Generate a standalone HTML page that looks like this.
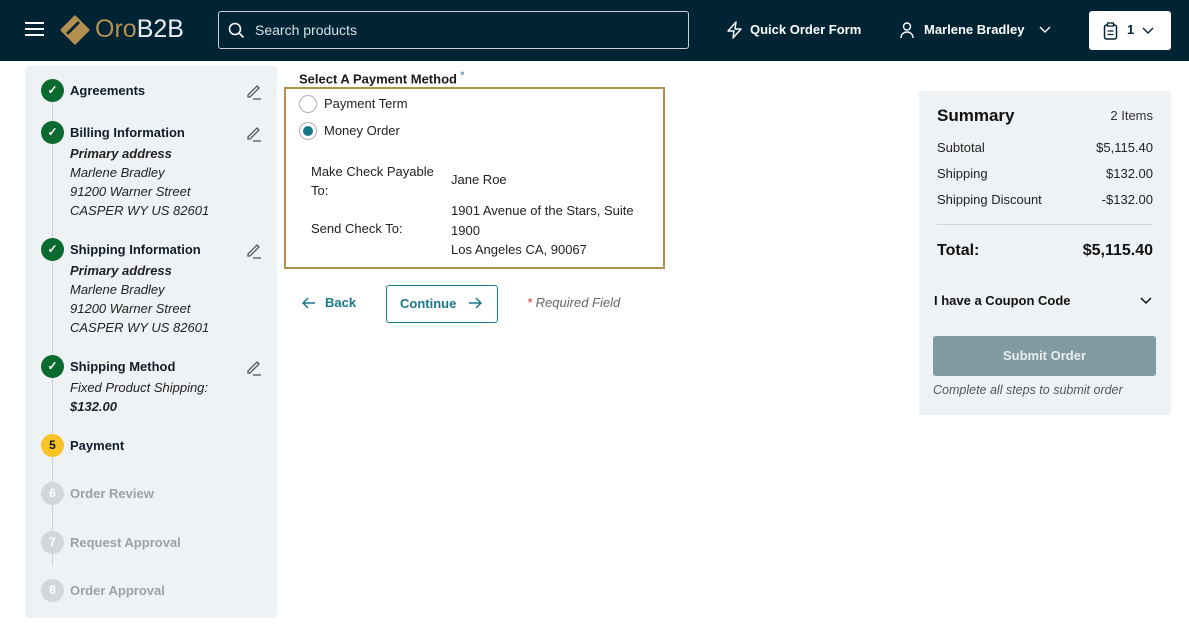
<!DOCTYPE html>
<html><head><style>
*{box-sizing:border-box;margin:0;padding:0}
body{width:1189px;height:632px;background:#fff;font-family:"Liberation Sans",sans-serif;color:#1a1a1a;position:relative;overflow:hidden;font-size:13px}
.hdr{position:absolute;left:0;top:0;width:1189px;height:61px;background:#012435}
.abs{position:absolute}
.side{position:absolute;left:25px;top:66px;width:252px;height:552px;background:#eff2f5;border-radius:4px}
.step{position:absolute;left:16px;font-size:13px}
.circ{position:absolute;left:0;width:23px;height:23px;border-radius:50%;background:#0b6a2f;color:#fff;text-align:center;line-height:23px;font-size:12px;font-weight:bold}
.st{position:absolute;left:29px;white-space:nowrap;font-weight:bold;color:#111d2a}
.it{position:absolute;left:29px;white-space:nowrap;font-style:italic;color:#222;line-height:19px}
.grey .circ{background:#d2d7dc;color:#fff}
.grey .st{color:#9aa1a8}
.sum{position:absolute;left:919px;top:91px;width:252px;height:324px;background:#eff2f5;border-radius:3px}
.row{position:absolute;left:18px;right:18px;font-size:13px;color:#222}
.row span{float:right}
</style></head><body>
<div class="hdr">
<div class="abs" style="left:25px;top:22px;width:19px;height:2px;background:#fff;box-shadow:0 6px 0 #fff,0 12px 0 #fff"></div>
<svg class="abs" style="left:60px;top:15px" width="30" height="30" viewBox="0 0 30 30"><path d="M15 2l13 13-13 13L2 15z" fill="#b58f4f" stroke="#b58f4f" stroke-width="3" stroke-linejoin="round"/><path d="M18 8l-10 10" stroke="#012435" stroke-width="3" stroke-linecap="round"/></svg>
<div class="abs" style="left:95px;top:15px;font-size:25px;color:#b58f4f">Oro<span style="color:#e9eef2">B2B</span></div>
<div class="abs" style="left:218px;top:11px;width:471px;height:38px;border:1px solid #c9d1d6;border-radius:3px"></div>
<svg class="abs" style="left:228px;top:22px" width="17" height="17" viewBox="0 0 17 17"><circle cx="7" cy="7" r="5.5" fill="none" stroke="#fff" stroke-width="1.6"/><path d="M11 11l4.5 4.5" stroke="#fff" stroke-width="1.6"/></svg>
<div class="abs" style="left:255px;top:22px;color:#d8e0e5;font-size:14px">Search products</div>
<svg class="abs" style="left:726px;top:21px" width="17" height="18" viewBox="0 0 17 18"><path d="M10 1L2 10h6l-1 7 8-9H9z" fill="none" stroke="#fff" stroke-width="1.4" stroke-linejoin="round"/></svg>
<div class="abs" style="left:750px;top:22px;color:#fff;font-weight:bold;font-size:13px">Quick Order Form</div>
<svg class="abs" style="left:899px;top:21px" width="17" height="18" viewBox="0 0 17 18"><circle cx="8" cy="5.5" r="3.5" fill="none" stroke="#fff" stroke-width="1.4"/><path d="M2 17c0-4 3-6 6-6s6 2 6 6" fill="none" stroke="#fff" stroke-width="1.4"/></svg>
<div class="abs" style="left:924px;top:22px;color:#fff;font-weight:bold;font-size:13px">Marlene Bradley</div>
<svg class="abs" style="left:1039px;top:26px" width="12" height="8"><path d="M1 1l5 5 5-5" fill="none" stroke="#fff" stroke-width="1.4"/></svg>
<div class="abs" style="left:1089px;top:11px;width:82px;height:39px;background:#fff;border-radius:3px"></div>
<svg class="abs" style="left:1103px;top:22px" width="15" height="18" viewBox="0 0 15 18"><rect x="1.5" y="3" width="12" height="14" rx="2" fill="none" stroke="#012435" stroke-width="1.5"/><rect x="4.5" y="1" width="6" height="3" fill="#fff" stroke="#012435" stroke-width="1.3"/><path d="M4.5 9h6M4.5 12.5h6" stroke="#012435" stroke-width="1.3"/></svg>
<div class="abs" style="left:1127px;top:22px;font-weight:bold;color:#012435">1</div>
<svg class="abs" style="left:1142px;top:27px" width="12" height="8"><path d="M1 1l5 5 5-5" fill="none" stroke="#012435" stroke-width="1.4"/></svg>
</div>

<div class="side">
<div class="abs" style="left:27px;top:30px;width:1px;height:470px;background:#ccd2d8"></div>
<div class="step" style="top:13px"><div class="circ">✓</div><div class="st" style="top:4px">Agreements</div></div>
<div class="step" style="top:55px"><div class="circ">✓</div><div class="st" style="top:4px">Billing Information</div>
<div class="it" style="top:23px;font-weight:bold">Primary address</div><div class="it" style="top:42px">Marlene Bradley</div><div class="it" style="top:61px">91200 Warner Street</div><div class="it" style="top:80px">CASPER WY US 82601</div></div>
<div class="step" style="top:172px"><div class="circ">✓</div><div class="st" style="top:4px">Shipping Information</div>
<div class="it" style="top:23px;font-weight:bold">Primary address</div><div class="it" style="top:42px">Marlene Bradley</div><div class="it" style="top:61px">91200 Warner Street</div><div class="it" style="top:80px">CASPER WY US 82601</div></div>
<div class="step" style="top:289px"><div class="circ">✓</div><div class="st" style="top:4px">Shipping Method</div>
<div class="it" style="top:23px">Fixed Product Shipping:</div><div class="it" style="top:42px;font-weight:bold">$132.00</div></div>
<div class="step" style="top:368px"><div class="circ" style="background:#f7c325;color:#111">5</div><div class="st" style="top:4px">Payment</div></div>
<div class="step grey" style="top:416px"><div class="circ">6</div><div class="st" style="top:4px">Order Review</div></div>
<div class="step grey" style="top:465px"><div class="circ">7</div><div class="st" style="top:4px">Request Approval</div></div>
<div class="step grey" style="top:513px"><div class="circ">8</div><div class="st" style="top:4px">Order Approval</div></div>
<svg class="abs" style="left:220px;top:16px" width="18" height="18" viewBox="0 0 18 18"><path d="M3 13l9-9 2 2-9 9H3z" fill="none" stroke="#555" stroke-width="1.3"/><path d="M8 17h8" stroke="#555" stroke-width="1.3"/></svg>
<svg class="abs" style="left:220px;top:58px" width="18" height="18" viewBox="0 0 18 18"><path d="M3 13l9-9 2 2-9 9H3z" fill="none" stroke="#555" stroke-width="1.3"/><path d="M8 17h8" stroke="#555" stroke-width="1.3"/></svg>
<svg class="abs" style="left:220px;top:175px" width="18" height="18" viewBox="0 0 18 18"><path d="M3 13l9-9 2 2-9 9H3z" fill="none" stroke="#555" stroke-width="1.3"/><path d="M8 17h8" stroke="#555" stroke-width="1.3"/></svg>
<svg class="abs" style="left:220px;top:292px" width="18" height="18" viewBox="0 0 18 18"><path d="M3 13l9-9 2 2-9 9H3z" fill="none" stroke="#555" stroke-width="1.3"/><path d="M8 17h8" stroke="#555" stroke-width="1.3"/></svg>
</div>

<div class="abs" style="left:299px;top:70px;font-weight:bold;font-size:13px">Select A Payment Method <sup style="color:#4a7fbf;font-size:9px">*</sup></div>
<div class="abs" style="left:284px;top:87px;width:381px;height:182px;border:2px solid #b58f4f"></div>
<div class="abs" style="left:299px;top:95px;width:18px;height:18px;border:1px solid #aab2b9;border-radius:50%"></div>
<div class="abs" style="left:324px;top:96px;color:#222">Payment Term</div>
<div class="abs" style="left:299px;top:122px;width:18px;height:18px;border:1px solid #aab2b9;border-radius:50%"><div style="margin:3px;width:10px;height:10px;border-radius:50%;background:#167a8a"></div></div>
<div class="abs" style="left:324px;top:123px;color:#222">Money Order</div>
<div class="abs" style="left:311px;top:162px;line-height:19px;color:#222">Make Check Payable<br>To:</div>
<div class="abs" style="left:451px;top:172px;color:#222">Jane Roe</div>
<div class="abs" style="left:311px;top:221px;color:#222">Send Check To:</div>
<div class="abs" style="left:451px;top:201px;line-height:19.5px;color:#222">1901 Avenue of the Stars, Suite<br>1900<br>Los Angeles CA, 90067</div>

<svg class="abs" style="left:302px;top:297px" width="14" height="12" viewBox="0 0 14 12"><path d="M13 6H2M6 1L1 6l5 5" fill="none" stroke="#167a8a" stroke-width="1.5"/></svg>
<div class="abs" style="left:325px;top:295px;color:#167a8a;font-weight:bold">Back</div>
<div class="abs" style="left:386px;top:285px;width:112px;height:38px;border:1px solid #167a8a;border-radius:3px;color:#167a8a;font-weight:bold;line-height:36px;padding-left:13px">Continue</div>
<svg class="abs" style="left:468px;top:297px" width="14" height="12" viewBox="0 0 14 12"><path d="M1 6h11M8 1l5 5-5 5" fill="none" stroke="#167a8a" stroke-width="1.5"/></svg>
<div class="abs" style="left:527px;top:295px;font-style:italic;color:#666"><span style="color:#c33">*</span> Required Field</div>

<div class="sum">
<div class="abs" style="left:18px;top:15px;font-size:17px;font-weight:bold;color:#111">Summary</div>
<div class="abs" style="right:18px;top:17px;color:#333">2 Items</div>
<div class="row" style="top:49px">Subtotal<span>$5,115.40</span></div>
<div class="row" style="top:75px">Shipping<span>$132.00</span></div>
<div class="row" style="top:101px">Shipping Discount<span>-$132.00</span></div>
<div class="abs" style="left:18px;right:18px;top:133px;height:1px;background:#cfd5da"></div>
<div class="row" style="top:151px;font-size:16px;font-weight:bold;color:#111">Total:<span>$5,115.40</span></div>
<div class="row" style="top:202px;left:15px;font-weight:bold;color:#111">I have a Coupon Code</div>
<svg class="abs" style="left:221px;top:206px" width="12" height="8"><path d="M1 1l5 5 5-5" fill="none" stroke="#111" stroke-width="1.5"/></svg>
<div class="abs" style="left:14px;top:245px;width:223px;height:40px;background:#7f9aa0;border-radius:3px;color:#e8eef0;font-weight:bold;text-align:center;line-height:40px">Submit Order</div>
<div class="abs" style="left:14px;top:292px;font-style:italic;color:#555;font-size:12.5px">Complete all steps to submit order</div>
</div>
</body></html>
